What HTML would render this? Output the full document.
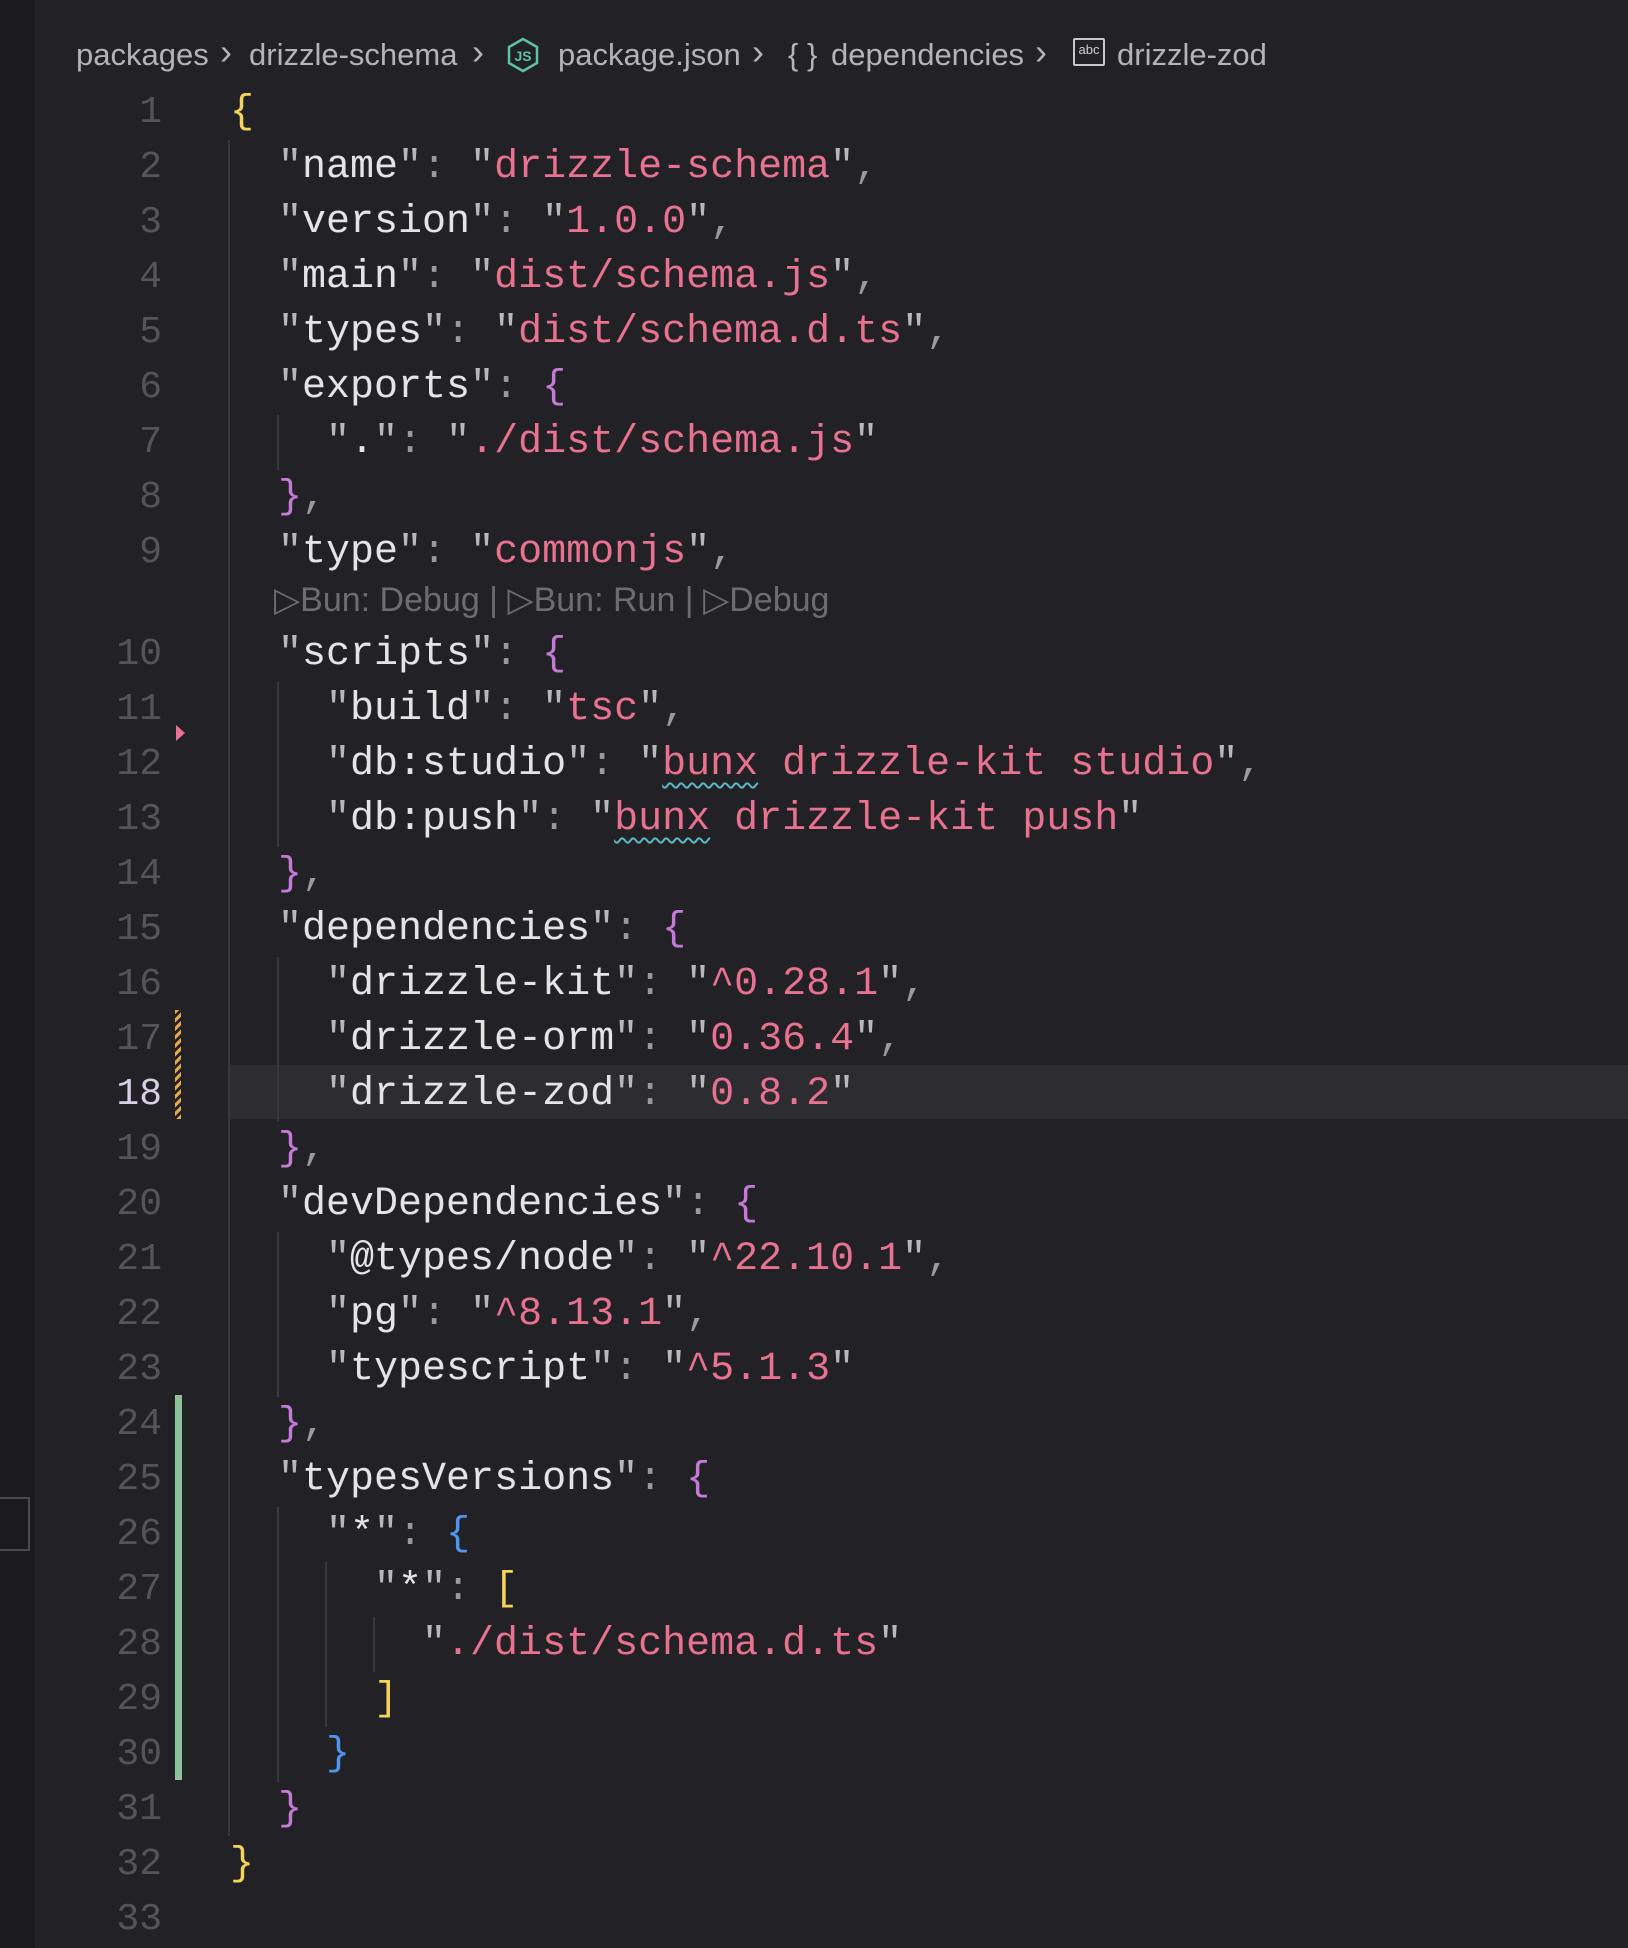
<!DOCTYPE html>
<html><head><meta charset="utf-8"><style>
html,body{margin:0;padding:0;}
body{width:1628px;height:1948px;background:#222226;position:relative;overflow:hidden;font-family:"Liberation Mono",monospace;}
.strip{position:absolute;left:0;top:0;width:35px;height:1948px;background:#1b1b1f;}
.bc{position:absolute;top:36px;font-family:"Liberation Sans",sans-serif;font-size:31px;color:#b4b4b8;white-space:nowrap;line-height:38px;}
.sep{font-size:36px;top:33px;}
.ln{position:absolute;left:60px;width:102px;text-align:right;font-size:38px;color:#54545a;line-height:55px;height:55px;}
.cd{position:absolute;left:230px;font-size:40px;line-height:55px;height:55px;white-space:pre;color:#e4e4e4;}
.q{color:#b8b8b8}.p{color:#9a9a9a}.s{color:#e8728f}.y{color:#f5d35a}.m{color:#c67ad8}.b{color:#4f96f0}
.g{position:absolute;width:2px;background:#38383e;}
.w{text-decoration:underline wavy #5ab8c8;text-decoration-thickness:2px;text-underline-offset:8px;}
</style></head><body>
<div class="strip"></div>
<div style="position:absolute;left:0;top:1497px;width:30px;height:54px;border:2px solid #4a4a50;border-left:none;box-sizing:border-box;"></div>

<div class="bc" style="left:76px">packages</div>
<div class="bc sep" style="left:220px">&#8250;</div>
<div class="bc" style="left:249px">drizzle-schema</div>
<div class="bc sep" style="left:472px">&#8250;</div>
<svg style="position:absolute;left:506px;top:37px" width="34" height="36" viewBox="0 0 34 36"><path d="M17 2 L31 10 L31 26 L17 34 L3 26 L3 10 Z" fill="none" stroke="#5fc0a8" stroke-width="2.5"/><text x="17" y="24" font-family="Liberation Sans" font-size="14" font-weight="bold" fill="#5fc0a8" text-anchor="middle">JS</text></svg>
<div class="bc" style="left:558px">package.json</div>
<div class="bc sep" style="left:752px">&#8250;</div>
<div class="bc" style="left:788px">{ }</div>
<div class="bc" style="left:831px">dependencies</div>
<div class="bc sep" style="left:1035px">&#8250;</div>
<div style="position:absolute;left:1073px;top:38px;width:32px;height:28px;border:2px solid #c8c8cc;box-sizing:border-box;border-radius:2px;font-family:'Liberation Sans',sans-serif;font-size:13px;color:#d0d0d4;text-align:center;line-height:20px;">abc</div>
<div class="bc" style="left:1117px">drizzle-zod</div>

<div style="position:absolute;left:230px;top:1065px;width:1398px;height:54px;background:#2c2c31;"></div>

<div class="g" style="left:228px;top:140px;height:1696px"></div>
<div class="g" style="left:277px;top:415px;height:55px"></div>
<div class="g" style="left:277px;top:682px;height:165px"></div>
<div class="g" style="left:277px;top:957px;height:165px"></div>
<div class="g" style="left:277px;top:1232px;height:165px"></div>
<div class="g" style="left:277px;top:1507px;height:275px"></div>
<div class="g" style="left:325px;top:1562px;height:165px"></div>
<div class="g" style="left:373px;top:1617px;height:55px"></div>

<div style="position:absolute;left:176px;top:725px;width:0;height:0;border-top:8px solid transparent;border-bottom:8px solid transparent;border-left:9px solid #e8728f;"></div>
<div style="position:absolute;left:175px;top:1010px;width:6px;height:109px;background:repeating-linear-gradient(135deg,#e8a84a 0 3px,transparent 3px 6px);"></div>
<div style="position:absolute;left:175px;top:1395px;width:7px;height:385px;background:#8fc39b;"></div>

<div style="position:absolute;left:274px;top:580px;font-family:'Liberation Sans',sans-serif;font-size:34px;color:#6c6c72;white-space:nowrap;line-height:40px;">&#9655;Bun: Debug | &#9655;Bun: Run | &#9655;Debug</div>

<div class="ln" style="top:85px">1</div><div class="cd" style="top:85px"><span class="y">{</span></div>
<div class="ln" style="top:140px">2</div><div class="cd" style="top:140px">  <span class="q">"</span>name<span class="q">"</span><span class="p">:</span> <span class="q">"</span><span class="s">drizzle-schema</span><span class="q">"</span><span class="p">,</span></div>
<div class="ln" style="top:195px">3</div><div class="cd" style="top:195px">  <span class="q">"</span>version<span class="q">"</span><span class="p">:</span> <span class="q">"</span><span class="s">1.0.0</span><span class="q">"</span><span class="p">,</span></div>
<div class="ln" style="top:250px">4</div><div class="cd" style="top:250px">  <span class="q">"</span>main<span class="q">"</span><span class="p">:</span> <span class="q">"</span><span class="s">dist/schema.js</span><span class="q">"</span><span class="p">,</span></div>
<div class="ln" style="top:305px">5</div><div class="cd" style="top:305px">  <span class="q">"</span>types<span class="q">"</span><span class="p">:</span> <span class="q">"</span><span class="s">dist/schema.d.ts</span><span class="q">"</span><span class="p">,</span></div>
<div class="ln" style="top:360px">6</div><div class="cd" style="top:360px">  <span class="q">"</span>exports<span class="q">"</span><span class="p">:</span> <span class="m">{</span></div>
<div class="ln" style="top:415px">7</div><div class="cd" style="top:415px">    <span class="q">"</span>.<span class="q">"</span><span class="p">:</span> <span class="q">"</span><span class="s">./dist/schema.js</span><span class="q">"</span></div>
<div class="ln" style="top:470px">8</div><div class="cd" style="top:470px">  <span class="m">}</span><span class="p">,</span></div>
<div class="ln" style="top:525px">9</div><div class="cd" style="top:525px">  <span class="q">"</span>type<span class="q">"</span><span class="p">:</span> <span class="q">"</span><span class="s">commonjs</span><span class="q">"</span><span class="p">,</span></div>
<div class="ln" style="top:627px">10</div><div class="cd" style="top:627px">  <span class="q">"</span>scripts<span class="q">"</span><span class="p">:</span> <span class="m">{</span></div>
<div class="ln" style="top:682px">11</div><div class="cd" style="top:682px">    <span class="q">"</span>build<span class="q">"</span><span class="p">:</span> <span class="q">"</span><span class="s">tsc</span><span class="q">"</span><span class="p">,</span></div>
<div class="ln" style="top:737px">12</div><div class="cd" style="top:737px">    <span class="q">"</span>db:studio<span class="q">"</span><span class="p">:</span> <span class="q">"</span><span class="s"><span class="w">bunx</span> drizzle-kit studio</span><span class="q">"</span><span class="p">,</span></div>
<div class="ln" style="top:792px">13</div><div class="cd" style="top:792px">    <span class="q">"</span>db:push<span class="q">"</span><span class="p">:</span> <span class="q">"</span><span class="s"><span class="w">bunx</span> drizzle-kit push</span><span class="q">"</span></div>
<div class="ln" style="top:847px">14</div><div class="cd" style="top:847px">  <span class="m">}</span><span class="p">,</span></div>
<div class="ln" style="top:902px">15</div><div class="cd" style="top:902px">  <span class="q">"</span>dependencies<span class="q">"</span><span class="p">:</span> <span class="m">{</span></div>
<div class="ln" style="top:957px">16</div><div class="cd" style="top:957px">    <span class="q">"</span>drizzle-kit<span class="q">"</span><span class="p">:</span> <span class="q">"</span><span class="s">^0.28.1</span><span class="q">"</span><span class="p">,</span></div>
<div class="ln" style="top:1012px">17</div><div class="cd" style="top:1012px">    <span class="q">"</span>drizzle-orm<span class="q">"</span><span class="p">:</span> <span class="q">"</span><span class="s">0.36.4</span><span class="q">"</span><span class="p">,</span></div>
<div class="ln" style="top:1067px;color:#d8d0e4">18</div><div class="cd" style="top:1067px">    <span class="q">"</span>drizzle-zod<span class="q">"</span><span class="p">:</span> <span class="q">"</span><span class="s">0.8.2</span><span class="q">"</span></div>
<div class="ln" style="top:1122px">19</div><div class="cd" style="top:1122px">  <span class="m">}</span><span class="p">,</span></div>
<div class="ln" style="top:1177px">20</div><div class="cd" style="top:1177px">  <span class="q">"</span>devDependencies<span class="q">"</span><span class="p">:</span> <span class="m">{</span></div>
<div class="ln" style="top:1232px">21</div><div class="cd" style="top:1232px">    <span class="q">"</span>@types/node<span class="q">"</span><span class="p">:</span> <span class="q">"</span><span class="s">^22.10.1</span><span class="q">"</span><span class="p">,</span></div>
<div class="ln" style="top:1287px">22</div><div class="cd" style="top:1287px">    <span class="q">"</span>pg<span class="q">"</span><span class="p">:</span> <span class="q">"</span><span class="s">^8.13.1</span><span class="q">"</span><span class="p">,</span></div>
<div class="ln" style="top:1342px">23</div><div class="cd" style="top:1342px">    <span class="q">"</span>typescript<span class="q">"</span><span class="p">:</span> <span class="q">"</span><span class="s">^5.1.3</span><span class="q">"</span></div>
<div class="ln" style="top:1397px">24</div><div class="cd" style="top:1397px">  <span class="m">}</span><span class="p">,</span></div>
<div class="ln" style="top:1452px">25</div><div class="cd" style="top:1452px">  <span class="q">"</span>typesVersions<span class="q">"</span><span class="p">:</span> <span class="m">{</span></div>
<div class="ln" style="top:1507px">26</div><div class="cd" style="top:1507px">    <span class="q">"</span>*<span class="q">"</span><span class="p">:</span> <span class="b">{</span></div>
<div class="ln" style="top:1562px">27</div><div class="cd" style="top:1562px">      <span class="q">"</span>*<span class="q">"</span><span class="p">:</span> <span class="y">[</span></div>
<div class="ln" style="top:1617px">28</div><div class="cd" style="top:1617px">        <span class="q">"</span><span class="s">./dist/schema.d.ts</span><span class="q">"</span></div>
<div class="ln" style="top:1672px">29</div><div class="cd" style="top:1672px">      <span class="y">]</span></div>
<div class="ln" style="top:1727px">30</div><div class="cd" style="top:1727px">    <span class="b">}</span></div>
<div class="ln" style="top:1782px">31</div><div class="cd" style="top:1782px">  <span class="m">}</span></div>
<div class="ln" style="top:1837px">32</div><div class="cd" style="top:1837px"><span class="y">}</span></div>
<div class="ln" style="top:1892px">33</div>
</body></html>
